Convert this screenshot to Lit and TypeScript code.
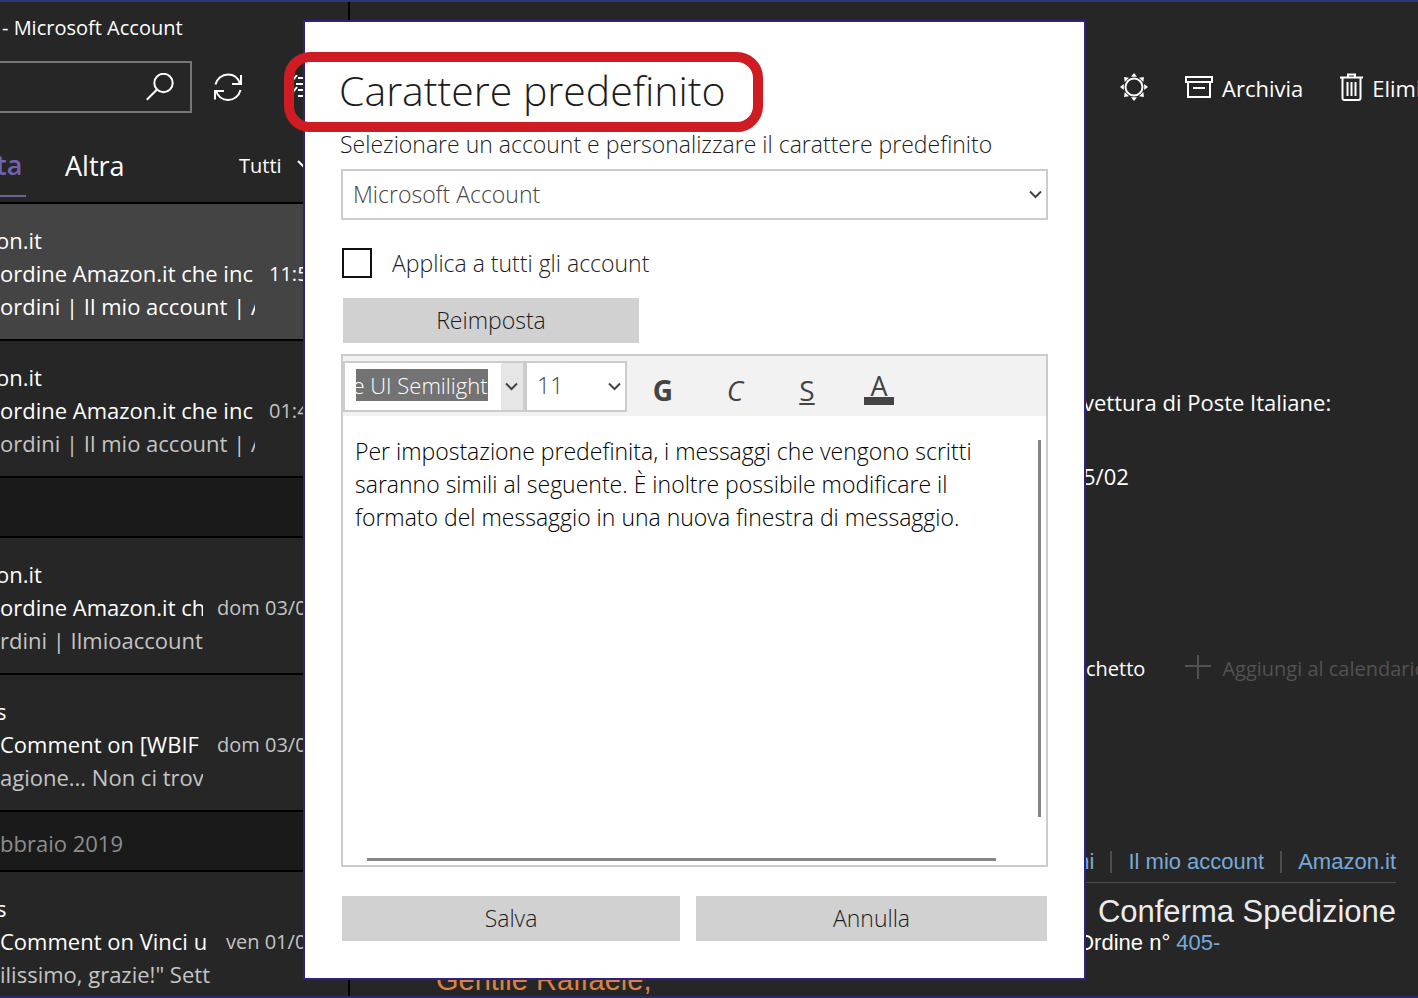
import { LitElement, html, css, svg } from "lit";
import { customElement, property, query } from "lit/decorators.js";
import { classMap } from "lit/directives/class-map.js";

type Message = {
  sender: string;
  subject: string;
  preview: string;
  time: string;
  span: "short" | "medium" | "long";
  selected?: boolean;
};
type Group = { group: string };

const ENTRIES: (Message | Group)[] = [
  { sender: "on.it", subject: "ordine Amazon.it che inc", preview: "ordini | Il mio account | A", time: "11:5", span: "short", selected: true },
  { sender: "on.it", subject: "ordine Amazon.it che inc", preview: "ordini | Il mio account | A", time: "01:4", span: "short" },
  { group: "" },
  { sender: "on.it", subject: "ordine Amazon.it ch", preview: "rdini | Ilmioaccount", time: "dom 03/0", span: "long" },
  { sender: "s", subject: "Comment on [WBIF", preview: "agione... Non ci trov", time: "dom 03/0", span: "long" },
  { group: "bbraio 2019" },
  { sender: "s", subject: "Comment on Vinci u", preview: "ilissimo, grazie!\" Sett", time: "ven 01/0", span: "medium" },
];

const chevron = svg`<path d="M1 1.5 6.500 7 12 1.500" fill="none" stroke="currentColor" stroke-width="2"/>`;

@customElement("mail-list")
class MailList extends LitElement {
  static styles = css`
    :host {
      display: flex;
      flex-direction: column;
      overflow: hidden;
      color: #fff;
      font-size: 22px;
      white-space: nowrap;
    }
    .head {
      flex: none;
      display: flex;
      flex-direction: column;
      border-bottom: 2px solid #000;
    }
    .title {
      font-size: 20px;
      line-height: 30px;
      padding: 11px 0 18px 2px;
    }
    .tools {
      display: flex;
      align-items: center;
      gap: 22px;
    }
    .search {
      box-sizing: border-box;
      width: 192px;
      height: 52px;
      display: flex;
      align-items: center;
      padding-right: 16px;
      border: 2px solid #767676;
      border-left: 0;
    }
    .search input {
      flex: 1;
      min-width: 0;
      border: 0;
      outline: 0;
      background: none;
      color: inherit;
      font: inherit;
    }
    button {
      padding: 0;
      border: 0;
      background: none;
      color: inherit;
      font: inherit;
    }
    svg {
      display: block;
    }
    .checks {
      margin-left: 28px;
    }
    .tabs {
      display: flex;
      align-items: stretch;
      height: 68px;
      margin-top: 21px;
      padding-bottom: 5px;
      box-sizing: border-box;
      line-height: 61px;
    }
    .tab {
      font-size: 27px;
      margin-right: 39px;
    }
    .tab.active {
      box-sizing: border-box;
      width: 26px;
      text-align: left;
      text-indent: -4px;
      color: #7264ac;
      font-weight: 600;
      border-bottom: 2px solid #6c6296;
    }
    .filter {
      display: flex;
      align-items: center;
      gap: 15px;
      margin-left: auto;
      width: 109px;
      font-size: 20px;
    }
    .entry {
      flex: none;
      box-sizing: border-box;
      height: 137px;
      padding-top: 20px;
      border-bottom: 2px solid #000;
      line-height: 33px;
    }
    .entry.selected {
      background: #444;
    }
    .sender {
      text-indent: -4px;
    }
    .row {
      display: grid;
      grid-template-columns: 1fr 79px;
      column-gap: 14px;
    }
    .row.medium {
      grid-template-columns: 1fr 122px;
      column-gap: 12px;
    }
    .row.long {
      grid-template-columns: 1fr 131px;
      column-gap: 14px;
    }
    .clip {
      overflow: hidden;
    }
    .preview,
    .time {
      color: #c4c4c4;
    }
    .time {
      font-size: 20px;
    }
    .selected .preview,
    .selected .time {
      color: #fff;
    }
    .group {
      flex: none;
      box-sizing: border-box;
      height: 60px;
      line-height: 62px;
      color: #8d8d8d;
      background: #1a1a1a;
      border-bottom: 2px solid #000;
    }
  `;

  render() {
    return html`
      <div class="head">
        <div class="title">- Microsoft Account</div>
        <div class="tools">
          <label class="search">
            <input type="text" aria-label="Cerca" />
            <svg width="28" height="28" viewBox="0 0 28 28" fill="none" stroke="currentColor" stroke-width="2">
              <circle cx="17.500" cy="10" r="9.200" /><path d="M10.800 16.800 .8 26.800" />
            </svg>
          </label>
          <button aria-label="Sincronizza">
            <svg width="28" height="28" viewBox="0 0 28 28" fill="none" stroke="currentColor" stroke-width="2">
              <path d="M1.500 11.500C3 5.500 8 1.500 14 1.500c5.500 0 10 3 12 9M27 2v9h-9M26.500 17c-1.500 6-6.500 10-12.500 10-5.500 0-10-3.500-12-9M1 26.500V18h9" />
            </svg>
          </button>
          <button class="checks" aria-label="Seleziona">
            <svg width="26" height="24" viewBox="0 0 26 24" fill="none" stroke="currentColor" stroke-width="2">
              <path d="m-1 3 2 2 4-5M-1 15l2 2 4-5M6 3h20M4 9h22M6 15h20M6 21h20" />
            </svg>
          </button>
        </div>
        <div class="tabs">
          <button class="tab active">ta</button>
          <button class="tab">Altra</button>
          <button class="filter">
            Tutti
            <svg width="16" height="16" viewBox="0 0 16 16" fill="none" stroke="currentColor" stroke-width="2"><path d="m1 3 7 7 7-7" /></svg>
          </button>
        </div>
      </div>
      ${ENTRIES.map((e) =>
        "group" in e
          ? html`<div class="group">${e.group}</div>`
          : html`<div class=${classMap({ entry: true, selected: !!e.selected })}>
              <div class="sender">${e.sender}</div>
              <div class=${"row " + e.span}><span class="clip">${e.subject}</span><span class="time">${e.time}</span></div>
              <div class=${"row " + e.span}><span class="clip preview">${e.preview}</span></div>
            </div>`
      )}
    `;
  }
}

@customElement("reading-pane")
class ReadingPane extends LitElement {
  static styles = css`
    :host {
      display: flex;
      flex-direction: column;
      overflow: hidden;
      color: #fff;
      font-size: 22px;
      white-space: nowrap;
    }
    .bar,
    .actions {
      display: flex;
      align-items: center;
      padding-left: 770px;
    }
    .bar {
      height: 54px;
      margin-top: 59px;
    }
    button {
      flex: none;
      display: flex;
      align-items: center;
      gap: 9px;
      padding: 0;
      border: 0;
      background: none;
      color: inherit;
      font: inherit;
    }
    .bar button {
      margin-right: 37px;
    }
    .bar span {
      padding-top: 2px;
    }
    svg {
      display: block;
    }
    .note {
      padding-left: 733px;
      margin-top: 272px;
      line-height: 37px;
    }
    .note p {
      margin: 0 0 37px;
    }
    .actions {
      padding-left: 736px;
      margin-top: 122px;
      font-size: 20px;
      line-height: 30px;
      gap: 40px;
    }
    .actions button {
      gap: 11px;
    }
    .actions .off {
      color: #525252;
    }
    .mail {
      font-family: "Liberation Sans", Arial, sans-serif;
      padding: 0 22px 0 86px;
      margin-top: 158px;
    }
    .links {
      display: flex;
      justify-content: flex-end;
      align-items: center;
      height: 40px;
      border-bottom: 1px solid #4d4d4d;
    }
    .links a {
      line-height: 22px;
      padding-left: 16px;
      margin-left: 16px;
      border-left: 2px solid #4d4d4d;
    }
    .links a:first-child {
      border: 0;
    }
    a {
      color: #76aadb;
      text-decoration: none;
    }
    .subject {
      text-align: right;
      font-size: 31px;
      line-height: 34px;
      margin-top: 12px;
      color: #ececec;
    }
    .order {
      padding-left: 641px;
      line-height: 26px;
      margin-top: 1px;
    }
    .hello {
      color: #dc8144;
      font-size: 29px;
      line-height: 32px;
      margin-top: 8px;
    }
  `;

  render() {
    return html`
      <div class="bar">
        <button aria-label="Tema">
          <svg width="28" height="28" viewBox="0 0 28 28" fill="none" stroke="currentColor" stroke-width="2">
            <circle cx="14" cy="14" r="8.500" />
            <g fill="currentColor" stroke="none">
              ${[0, 45, 90, 135, 180, 225, 270, 315].map((a) => svg`<path d="M14 0l3 3.800h-6z" transform=${`rotate(${a} 14 14)`} />`)}
            </g>
          </svg>
        </button>
        <button>
          <svg width="28" height="24" viewBox="0 0 28 24" fill="none" stroke="currentColor" stroke-width="2">
            <path d="M1 2h26v5H1zM3 7v15h22V7M8 13h12" />
          </svg>
          <span>Archivia</span>
        </button>
        <button>
          <svg width="23" height="28" viewBox="0 0 23 28" fill="none" stroke="currentColor" stroke-width="2">
            <path d="M0 4.500h23M8 4V1.500h7V4M2.500 5v20q0 2 2 2h14q2 0 2-2V5M7.500 9v14M11.500 9v14M15.500 9v14" />
          </svg>
          <span>Elimina</span>
        </button>
      </div>
      <div class="note">
        <p>vettura di Poste Italiane:</p>
        <p>5/02</p>
      </div>
      <div class="actions">
        <button>chetto</button>
        <button class="off">
          <svg width="26" height="28" viewBox="0 0 26 28" fill="none" stroke="currentColor" stroke-width="2"><path d="M0 11h26M13-2v26" /></svg>
          Aggiungi al calendario
        </button>
      </div>
      <div class="mail">
        <nav class="links"><a href="#">ni</a><a href="#">Il mio account</a><a href="#">Amazon.it</a></nav>
        <div class="subject">Conferma Spedizione</div>
        <div class="order">Ordine n° <a href="#">405-</a></div>
        <div class="hello">Gentile Raffaele,</div>
      </div>
    `;
  }
}

@customElement("font-dialog")
class FontDialog extends LitElement {
  @property() family = "Segoe UI Semilight";
  @query(".family input") familyInput!: HTMLInputElement;

  static styles = css`
    :host {
      box-sizing: border-box;
      display: flex;
      flex-direction: column;
      padding: 41px 36px 37px;
      background: #fff;
      border: 2px solid #2f2183;
      color: #1c1c1c;
      font-size: 23px;
      font-weight: 300;
    }
    h1 {
      margin: 0 0 0 -2px;
      font-size: 41px;
      line-height: 54px;
      font-weight: 300;
    }
    .marker {
      position: absolute;
      left: -21px;
      top: 30px;
      box-sizing: border-box;
      width: 479px;
      height: 80px;
      border: 10px solid #ce1c22;
      border-radius: 26px;
      pointer-events: none;
    }
    .lead {
      line-height: 30px;
      margin: 12px 0 10px -1px;
      white-space: nowrap;
    }
    input,
    select,
    textarea,
    button {
      font: inherit;
      color: inherit;
      border-radius: 0;
      margin: 0;
      outline: 0;
    }
    .pick {
      display: grid;
      align-items: center;
      color: #444;
    }
    .pick > * {
      grid-area: 1 / 1;
    }
    .pick svg {
      justify-self: end;
      margin-right: 6px;
      pointer-events: none;
    }
    select {
      appearance: none;
      box-sizing: border-box;
      width: 100%;
      height: 51px;
      padding: 0 10px 2px;
      background: #fff;
      border: 2px solid #ccc;
    }
    .check {
      display: flex;
      align-items: center;
      gap: 20px;
      height: 30px;
      margin: 28px 0 20px;
      padding-left: 1px;
      line-height: 26px;
    }
    .check input {
      appearance: none;
      box-sizing: border-box;
      width: 30px;
      height: 30px;
      border: 2px solid #111;
      background: #fff;
    }
    .flat {
      height: 45px;
      padding: 0 0 2px;
      border: 0;
      background: #d1d1d1;
    }
    .reset {
      width: 296px;
      margin-left: 2px;
    }
    .editor {
      display: flex;
      flex-direction: column;
      margin-top: 11px;
      border: 2px solid #ccc;
    }
    .toolbar {
      display: flex;
      align-items: center;
      height: 60px;
      background: #f2f2f2;
      color: #444;
    }
    .family {
      box-sizing: border-box;
      display: flex;
      width: 182px;
      height: 51px;
      border: 2px solid #ccc;
      background: #fff;
    }
    .family input {
      flex: 1;
      min-width: 0;
      height: 32px;
      margin: 6px 13px 0 11px;
      padding: 0;
      border: 0;
      background: #737373;
      color: #fff;
      font-size: 22px;
    }
    .family button {
      display: flex;
      align-items: center;
      width: 22px;
      padding: 0 4px;
      border: 0;
      background: #e6e6e6;
    }
    .size {
      width: 102px;
    }
    .fmt {
      width: 72px;
      height: 60px;
      padding: 8px 0 0;
      border: 0;
      background: none;
      font-size: 28px;
      font-weight: 400;
    }
    .fmt svg {
      display: block;
      margin: 0 auto;
    }
    .fmt text {
      font-size: 27px;
      fill: currentColor;
      text-anchor: middle;
    }
    .bold {
      font-weight: 700;
    }
    .italic {
      font-style: italic;
    }
    .body {
      display: grid;
      grid-template-columns: 1fr 8px;
      grid-template-rows: 439px 10px;
      color: #000;
    }
    textarea {
      box-sizing: border-box;
      width: 100%;
      height: 100%;
      padding: 19px 0 0 12px;
      border: 0;
      resize: none;
      overflow: hidden;
      background: none;
      line-height: 33px;
      white-space: pre;
    }
    .vbar {
      width: 3px;
      margin: 24px 0 38px;
      background: #858585;
    }
    .hbar {
      height: 3px;
      margin: 3px 42px 0 24px;
      background: #858585;
    }
    .footer {
      display: grid;
      grid-template-columns: 338fr 351fr;
      gap: 16px;
      margin: 29px 1px 0;
    }
  `;

  firstUpdated() {
    this.familyInput.scrollLeft = this.familyInput.scrollWidth;
  }

  render() {
    const arrow = html`<svg width="13" height="9" viewBox="0 0 13 9">${chevron}</svg>`;
    return html`
      <h1>Carattere predefinito</h1>
      <div class="marker"></div>
      <label class="lead" for="account">Selezionare un account e personalizzare il carattere predefinito</label>
      <div class="pick">
        <select id="account"><option>Microsoft Account</option></select>
        ${arrow}
      </div>
      <label class="check"><input type="checkbox" />Applica a tutti gli account</label>
      <button class="flat reset">Reimposta</button>
      <div class="editor">
        <div class="toolbar">
          <div class="family">
            <input type="text" aria-label="Tipo di carattere" .value=${this.family} />
            <button aria-label="Apri elenco">${arrow}</button>
          </div>
          <div class="pick size">
            <select aria-label="Dimensione"><option>11</option></select>
            ${arrow}
          </div>
          <button class="fmt bold">G</button>
          <button class="fmt italic">C</button>
          <button class="fmt"><u>S</u></button>
          <button class="fmt" aria-label="Colore carattere">
            <svg width="30" height="32" viewBox="0 0 30 32"><text x="15" y="22">A</text><path d="M0 23h30v8H0z" fill="currentColor" /></svg>
          </button>
        </div>
        <div class="body">
          <textarea aria-label="Anteprima" .value=${"Per impostazione predefinita, i messaggi che vengono scritti\nsaranno simili al seguente. È inoltre possibile modificare il\nformato del messaggio in una nuova finestra di messaggio."}></textarea>
          <div class="vbar"></div>
          <div class="hbar"></div>
        </div>
      </div>
      <div class="footer">
        <button class="flat">Salva</button>
        <button class="flat">Annulla</button>
      </div>
    `;
  }
}

@customElement("app-root")
class AppRoot extends LitElement {
  static styles = css`
    :host {
      position: relative;
      box-sizing: border-box;
      display: grid;
      grid-template-columns: 348px 1fr;
      grid-template-rows: 100%;
      height: 100vh;
      overflow: hidden;
      border-top: 2px solid #2c3576;
      border-bottom: 2px solid #262d66;
      background: #262626;
      font-family: "Open Sans", "Noto Sans", sans-serif;
    }
    reading-pane {
      border-left: 2px solid #000;
    }
    font-dialog {
      position: absolute;
      left: 303px;
      top: 18px;
      width: 783px;
    }
  `;

  render() {
    return html`<mail-list></mail-list><reading-pane></reading-pane><font-dialog></font-dialog>`;
  }
}
